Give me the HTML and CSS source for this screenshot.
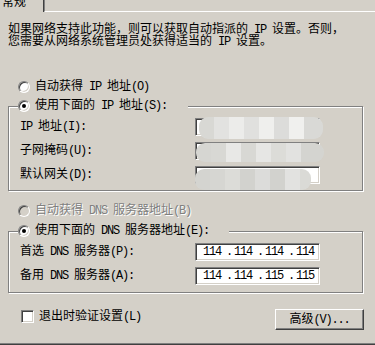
FILE: index.html
```html
<!DOCTYPE html>
<html lang="zh-CN">
<head>
<meta charset="utf-8">
<title>Internet 协议 (TCP/IP) 属性</title>
<link rel="stylesheet" href="styles.css">
</head>
<body>
<div class="tabs">
  <div class="tab"><span class="tab-label">常规</span></div>
  <div class="tab-rest"></div>
</div>
<div class="panel">
  <p class="intro">如果网络支持此功能，则可以获取自动指派的<span class="en"> IP </span>设置。否则，<br>您需要从网络系统管理员处获得适当的<span class="en"> IP </span>设置。</p>

  <div class="opt opt-first"><span class="radio"></span><span>自动获得<span class="en"> IP </span>地址<span class="en">(O)</span></span></div>

  <div class="group">
    <div class="legend legend-ip"><span class="radio on"></span><span>使用下面的<span class="en"> IP </span>地址<span class="en">(S):</span></span></div>
    <div class="row"><span class="lbl"><span class="en">IP </span>地址<span class="en">(I):</span></span><span class="field"><span class="mosaic m1"></span></span></div>
    <div class="row"><span class="lbl">子网掩码<span class="en">(U):</span></span><span class="field"><span class="mosaic m2"></span></span></div>
    <div class="row"><span class="lbl">默认网关<span class="en">(D):</span></span><span class="field"><span class="mosaic m3"></span></span></div>
  </div>

  <div class="opt opt-dis"><span class="radio dis"></span><span class="dis-text">自动获得<span class="en"> DNS </span>服务器地址<span class="en">(B)</span></span></div>

  <div class="group group-dns">
    <div class="legend legend-dns"><span class="radio on"></span><span>使用下面的<span class="en"> DNS </span>服务器地址<span class="en">(E):</span></span></div>
    <div class="row"><span class="lbl">首选<span class="en"> DNS </span>服务器<span class="en">(P):</span></span><span class="field ip"><span class="oct">114</span><span class="dot">.</span><span class="oct">114</span><span class="dot">.</span><span class="oct">114</span><span class="dot">.</span><span class="oct">114</span></span></div>
    <div class="row"><span class="lbl">备用<span class="en"> DNS </span>服务器<span class="en">(A):</span></span><span class="field ip"><span class="oct">114</span><span class="dot">.</span><span class="oct">114</span><span class="dot">.</span><span class="oct">115</span><span class="dot">.</span><span class="oct">115</span></span></div>
  </div>

  <div class="foot">
    <div class="check"><span class="box"></span><span>退出时验证设置<span class="en">(L)</span></span></div>
    <div class="btn"><span>高级<span class="en">(V)...</span></span></div>
  </div>
</div>
</body>
</html>
```
FILE: styles.css
```css
html, body {
  margin: 0;
  padding: 0;
}

body {
  width: 375px;
  height: 345px;
  overflow: hidden;
  background: #d4d0c8;
  color: #000;
  font-family: "Liberation Mono", "Noto Sans CJK SC", monospace;
  font-size: 12px;
  line-height: 12px;
}

/* half-width latin runs: 6px advance like the dialog font */
.en {
  letter-spacing: -1.2px;
}

/* tab strip */
.tabs {
  display: flex;
  height: 12px;
}

.tab {
  width: 43px;
  border-right: 1px solid #404040;
  overflow: hidden;
}

.tab-label {
  display: block;
  margin-top: -3px;
  padding-left: 2px;
  white-space: nowrap;
}

.tab-rest {
  flex: 1;
  border-left: 1px solid #808080;
  border-bottom: 1px solid #fff;
}

/* page body */
.panel {
  height: 332px;
  box-sizing: border-box;
  border-bottom: 1px solid #808080;
  box-shadow: 0 1px #404040;
  padding: 12px 12px 0 8px;
  display: flex;
  flex-direction: column;
}

.intro {
  margin: 0;
  white-space: nowrap;
}

.opt {
  display: flex;
  align-items: center;
  height: 12px;
  margin-left: 10px;
  white-space: nowrap;
}

.opt-first {
  margin-top: 33px;
}

.opt-dis {
  margin-top: 14px;
}

.dis-text {
  color: #808080;
  text-shadow: 1px 1px #fff;
}

/* classic radio */
.radio {
  position: relative;
  flex: none;
  width: 12px;
  height: 12px;
  box-sizing: border-box;
  border-radius: 50%;
  border: 1px solid;
  border-color: #808080 #fff #fff #808080;
  box-shadow: inset 1px 1px #404040, inset -1px -1px #d4d0c8;
  background: #fff;
  margin-right: 5px;
}

.radio.dis {
  background: #d4d0c8;
}

.radio.on::after {
  content: "";
  position: absolute;
  left: 3px;
  top: 3px;
  width: 4px;
  height: 4px;
  border-radius: 50%;
  background: #000;
}

/* group boxes */
.group {
  position: relative;
  margin-top: 13px;
  border: 1px solid #808080;
  box-shadow: inset 1px 1px #fff, 1px 1px #fff;
  padding: 11px 0 6px 11px;
}

.group-dns {
  margin-top: 14px;
  padding-bottom: 7px;
}

.legend {
  position: absolute;
  top: -7px;
  left: 9px;
  height: 12px;
  display: flex;
  align-items: center;
  background: #d4d0c8;
  white-space: nowrap;
}

.legend-ip {
  width: 170px;
}

.legend-dns {
  width: 211px;
}

.row {
  display: flex;
  align-items: center;
  height: 18px;
}

.row + .row {
  margin-top: 6px;
}

.lbl {
  width: 175px;
  flex: none;
  white-space: nowrap;
}

/* sunken edit / ip controls */
.field {
  position: relative;
  width: 125px;
  height: 18px;
  box-sizing: border-box;
  border: 1px solid;
  border-color: #808080 #fff #fff #808080;
  box-shadow: inset 1px 1px #404040, inset -1px -1px #d4d0c8;
  background: #fff;
}

.ip {
  display: flex;
  align-items: center;
  padding-left: 4px;
}

.oct {
  width: 24px;
  text-align: center;
  letter-spacing: -1.2px;
}

.dot {
  width: 7px;
  padding-left: 2px;
  box-sizing: border-box;
  text-align: center;
}

/* blurred-out addresses */
.mosaic {
  position: absolute;
  border-radius: 9px;
  filter: blur(0.7px);
}

.m1 {
  left: 3px;
  top: -2px;
  width: 124px;
  height: 22px;
  background: linear-gradient(90deg, #d8d8d4 0 15px, #e2e2e0 15px 30px, #ececea 30px 45px, #e0e0de 45px 60px, #efefed 60px 75px, #dcdcda 75px 90px, #f0f0ee 90px 105px, #d9d9d6 105px);
}

.m2 {
  left: 0;
  top: 0;
  width: 128px;
  height: 19px;
  background: linear-gradient(90deg, #d6d6d2 0 15px, #d8d8d4 15px 30px, #e8e8e6 30px 45px, #d8d8d4 45px 60px, #e6e6e4 60px 75px, #dcdcd8 75px 90px, #e2e2e0 90px 105px, #d4d4d0 105px);
}

.m3 {
  left: -1px;
  top: 2px;
  width: 116px;
  height: 21px;
  background: linear-gradient(90deg, #d4d4d0 0 15px, #d6d6d2 15px 30px, #dcdcd8 30px 45px, #d2d2ce 45px 60px, #dcdcda 60px 75px, #d2d2ce 75px 90px, #e2e2e0 90px 105px, #dadad6 105px);
}

/* footer */
.foot {
  display: flex;
  align-items: flex-start;
  margin-top: 16px;
  padding-left: 13px;
}

.check {
  display: flex;
  align-items: center;
  margin-top: 1px;
  white-space: nowrap;
}

.box {
  width: 13px;
  height: 13px;
  box-sizing: border-box;
  border: 1px solid;
  border-color: #808080 #fff #fff #808080;
  box-shadow: inset 1px 1px #404040, inset -1px -1px #d4d0c8;
  background: #fff;
  margin-right: 5px;
}

.btn {
  margin-left: auto;
  margin-right: -1px;
  width: 89px;
  height: 21px;
  box-sizing: border-box;
  border: 1px solid;
  border-color: #fff #404040 #404040 #fff;
  box-shadow: inset -1px -1px #808080, inset 1px 1px #d4d0c8;
  display: flex;
  align-items: center;
  justify-content: center;
  white-space: nowrap;
}
```
